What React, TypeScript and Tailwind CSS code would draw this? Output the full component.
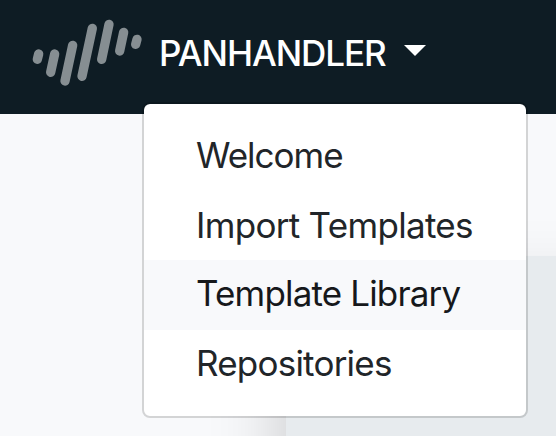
const items = [
  { label: "Welcome", style: "tracking-[-1px]" },
  { label: "Import Templates", style: "tracking-[-0.7px]" },
  { label: "Template Library", style: "pb-1 tracking-[-0.84px]", active: true },
  { label: "Repositories", style: "pb-1 tracking-[-0.78px]" },
];

function Logo() {
  return (
    <svg
      className="ml-5 h-[100px] w-[140px] shrink-0"
      viewBox="0 0 420 300"
      fill="none"
      stroke="#868e92"
      strokeWidth="28"
      strokeLinecap="round"
    >
      <path d="M56 147L52 163M104 147L92 202M158 121L135 228M217 70L186 214M267 58L245 163M311 82L299 138M351 103L347 118" />
    </svg>
  );
}

export default function App() {
  return (
    <div className="relative h-[436px] w-[556px] overflow-hidden bg-[#f8f9fb] font-['Inter','Liberation_Sans',sans-serif]">
      <header className="flex h-[114px] items-start bg-[#0e1c24] pt-[5px] text-white">
        <Logo />
        <button className="-ml-px flex h-[96px] items-center text-[35px] leading-[54px] font-[470]">
          <span className="tracking-[-1.05px]">PANHANDLER</span>
          <span className="mt-[-5px] ml-[18px] border-x-[11px] border-t-[11px] border-x-transparent border-t-white" />
        </button>
      </header>
      <main className="pt-[142px] pl-[286px]">
        <section className="h-[400px] w-[600px] bg-[#e7ebee] shadow-[0_40px_72px_rgba(0,0,0,0.2)]" />
      </main>
      <nav className="absolute top-[102px] left-[142px] h-[316px] w-[386px] rounded-lg border-2 border-black/15 bg-white bg-clip-padding py-4">
        {items.map((item) => (
          <a
            key={item.label}
            className={`flex h-[70px] items-center pl-[52px] text-[35px] leading-[54px] font-[440] whitespace-nowrap ${item.style} ${
              item.active ? "bg-[#f8f9fb] text-[#16181b]" : "text-[#212529]"
            }`}
          >
            {item.label}
          </a>
        ))}
      </nav>
    </div>
  );
}
